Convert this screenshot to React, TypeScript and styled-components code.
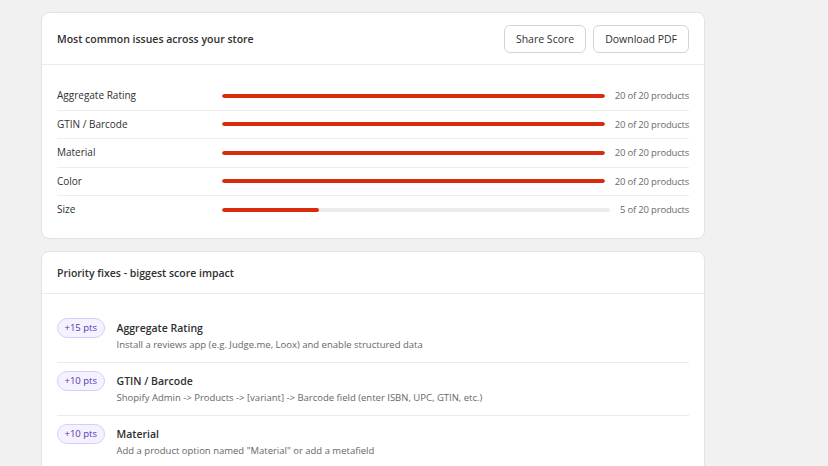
import styled, { createGlobalStyle } from "styled-components";

const GlobalStyle = createGlobalStyle`
  body {
    margin: 0;
    background: #f1f1f1;
    font-family: "Open Sans", "Liberation Sans", sans-serif;
    color: #303030;
  }
`;

const ISSUES = [
  { name: "Aggregate Rating", count: 20 },
  { name: "GTIN / Barcode", count: 20 },
  { name: "Material", count: 20 },
  { name: "Color", count: 20 },
  { name: "Size", count: 5 },
];

const TOTAL = 20;

const FIXES = [
  {
    pts: 15,
    title: "Aggregate Rating",
    text: "Install a reviews app (e.g. Judge.me, Loox) and enable structured data",
  },
  {
    pts: 10,
    title: "GTIN / Barcode",
    text: "Shopify Admin -> Products -> [variant] -> Barcode field (enter ISBN, UPC, GTIN, etc.)",
  },
  {
    pts: 10,
    title: "Material",
    text: 'Add a product option named "Material" or add a metafield',
  },
];

export default function App() {
  return (
    <S.Page>
      <GlobalStyle />
      <S.Card>
        <S.Header>
          <S.Title>Most common issues across your store</S.Title>
          <S.Actions>
            <S.Button>Share Score</S.Button>
            <S.Button>Download PDF</S.Button>
          </S.Actions>
        </S.Header>
        <S.IssueList>
          {ISSUES.map((issue) => (
            <S.IssueRow key={issue.name}>
              <S.Label>{issue.name}</S.Label>
              <S.Track>
                <S.Fill style={{ width: `${(issue.count / TOTAL) * 100}%` }} />
              </S.Track>
              <S.Count>
                {issue.count} of {TOTAL} products
              </S.Count>
            </S.IssueRow>
          ))}
        </S.IssueList>
      </S.Card>

      <S.Card>
        <S.Header>
          <S.Title>Priority fixes - biggest score impact</S.Title>
        </S.Header>
        <S.FixList>
          {FIXES.map((fix) => (
            <S.FixRow key={fix.title}>
              <S.Badge>+{fix.pts} pts</S.Badge>
              <S.FixText>
                <S.FixTitle>{fix.title}</S.FixTitle>
                <S.FixDesc>{fix.text}</S.FixDesc>
              </S.FixText>
            </S.FixRow>
          ))}
        </S.FixList>
      </S.Card>
    </S.Page>
  );
}

const S = {
  Page: styled.div`
    display: flex;
    flex-direction: column;
    gap: 12px;
    width: 664px;
    padding: 12px 0 0 41px;
  `,

  Card: styled.section`
    background: #ffffff;
    border: 1px solid #e3e3e3;
    border-radius: 8px;
  `,

  Header: styled.header`
    display: flex;
    align-items: center;
    justify-content: space-between;
    min-height: 18px;
    padding: 12px 15px 11px;
    border-bottom: 1px solid #ebebeb;
  `,

  Title: styled.h2`
    margin: 0;
    font-size: 10.5px;
    line-height: 18px;
    font-weight: 600;
    color: #303030;
  `,

  Actions: styled.div`
    display: flex;
    gap: 7px;
  `,

  Button: styled.button`
    height: 28px;
    padding: 0 11px;
    border: 1px solid #d4d4d4;
    border-radius: 6px;
    background: #ffffff;
    font-family: inherit;
    font-size: 10.5px;
    font-weight: 500;
    color: #303030;
  `,

  IssueList: styled.div`
    padding: 17px 15px 14px;
  `,

  IssueRow: styled.div`
    display: flex;
    align-items: center;
    gap: 10px;
    padding: 7px 0;
    line-height: 13.5px;
    border-bottom: 1px solid #ededed;

    &:last-child {
      border-bottom: none;
    }
  `,

  Label: styled.span`
    flex: 0 0 155px;
    font-size: 10px;
    color: #303030;
  `,

  Track: styled.div`
    flex: 1;
    height: 4px;
    border-radius: 2px;
    background: #ececec;
    overflow: hidden;
  `,

  Fill: styled.div`
    height: 100%;
    border-radius: 2px;
    background: #d82c0d;
  `,

  Count: styled.span`
    font-size: 9.5px;
    letter-spacing: -0.2px;
    color: #6b6b6b;
    white-space: nowrap;
  `,

  FixList: styled.div`
    padding: 16px 15px 14px;
  `,

  FixRow: styled.div`
    display: flex;
    align-items: flex-start;
    gap: 12px;
    padding: 9px 0 10px;
    border-bottom: 1px solid #ebebeb;

    &:last-child {
      border-bottom: none;
    }
  `,

  Badge: styled.span`
    flex: none;
    height: 18px;
    margin-top: -1px;
    padding: 0 6.5px;
    border: 1px solid #d8cbff;
    border-radius: 10px;
    background: #f5f1ff;
    font-size: 9.5px;
    line-height: 18px;
    font-weight: 500;
    color: #5238ad;
  `,

  FixText: styled.div`
    display: flex;
    flex-direction: column;
  `,

  FixTitle: styled.span`
    font-size: 10.5px;
    line-height: 18px;
    font-weight: 600;
    color: #303030;
  `,

  FixDesc: styled.span`
    margin-top: 1px;
    font-size: 9.5px;
    line-height: 14px;
    color: #666666;
  `,
};
